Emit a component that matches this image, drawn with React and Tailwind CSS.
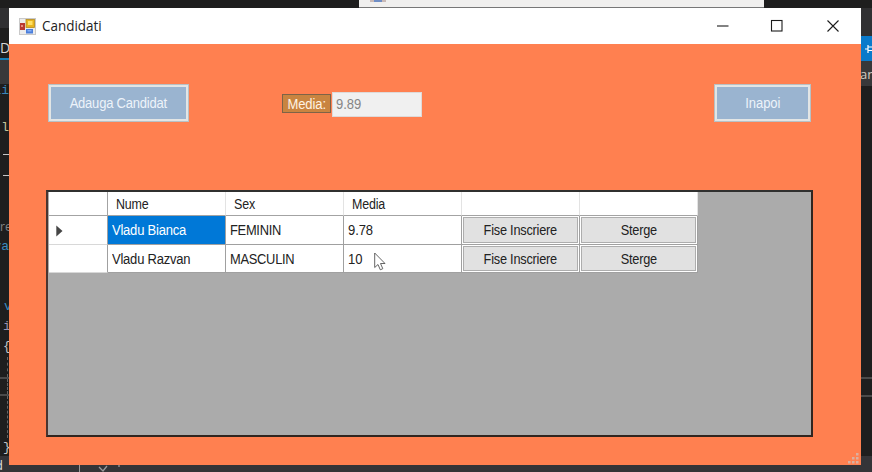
import React from "react";

const UI = "font-['Liberation_Sans',Arial,sans-serif]";

function FormIcon() {
  return (
    <svg width="17" height="17" viewBox="0 0 17 17" className="shrink-0">
      <rect x="0.5" y="0.5" width="16" height="16" fill="#ececec" stroke="#c9c9c9" />
      <rect x="1" y="5" width="5" height="7" fill="#b9382f" />
      <rect x="2" y="7" width="2" height="2" fill="#e88b7d" />
      <rect x="7" y="1.5" width="8.5" height="8" fill="#e9b51e" stroke="#b48b1d" strokeWidth="0.8" />
      <rect x="9" y="3" width="4.5" height="4" fill="#ffe066" />
      <rect x="7" y="11" width="7" height="4.5" fill="#4a7edb" />
      <rect x="8.5" y="12" width="4" height="1.5" fill="#86aff5" />
    </svg>
  );
}

function TitleBar() {
  return (
    <div className="flex h-9 items-center bg-white pl-[10px]">
      <FormIcon />
      <span className="ml-[6px] w-[62px] origin-left scale-x-[0.96] whitespace-nowrap font-['Open_Sans','Noto_Sans',sans-serif] text-[14px] leading-5 text-[#222]">
        Candidati
      </span>
      <svg width="126" height="14" viewBox="0 0 126 14" className="mr-[21px] ml-auto" fill="none" stroke="#1c1c1c" strokeWidth="1.1">
        <path d="M3 7H14.5" />
        <rect x="57.5" y="1.5" width="10.5" height="10.5" />
        <path d="M113.5 1.5L124.5 12.5M124.5 1.5L113.5 12.5" />
      </svg>
    </div>
  );
}

function ActionButton({ className, children }) {
  return (
    <button className={`${UI} h-[38px] border border-[#b8c1c5] bg-[#e2e5e5] p-[2px] text-[14px] text-[#edf3fa] ${className}`}>
      <span className="flex h-full items-center justify-center bg-[#9ab4d0] whitespace-nowrap">
        <span className="scale-x-[0.93]">{children}</span>
      </span>
    </button>
  );
}

function Toolbar() {
  return (
    <div className="flex items-start px-[39px] pt-10 pr-[50px]">
      <ActionButton className="w-[141px] tracking-[-0.25px]">Adauga Candidat</ActionButton>
      <div className={`${UI} mt-[10px] ml-[93px] flex h-[19px] w-[49px] items-center justify-center border border-[#7d6347] bg-[#c98440] pt-px text-[14px] tracking-[-0.1px] text-[#fff3e4]`}>
        <span className="scale-x-[0.93]">Media:</span>
      </div>
      <div className={`${UI} mt-2 ml-px flex h-[25px] w-[90px] items-center border border-[#dedad9] bg-[#f0f0f0] pl-[3px] text-[14px] text-[#858585]`}>
        <span className="origin-left scale-x-[0.93]">9.89</span>
      </div>
      <ActionButton className="ml-auto w-[97px] tracking-[-0.1px]">Inapoi</ActionButton>
    </div>
  );
}

function HeaderCell({ children }) {
  return (
    <div className="flex items-center border-r border-b border-r-[#e3e3e3] border-b-[#a3a3a3] pt-px pl-2 tracking-[-0.2px]">
      <span className="origin-left scale-x-[0.89]">{children}</span>
    </div>
  );
}

function Cell({ selected, children }) {
  return (
    <div className={`flex items-center border-r border-b border-[#a0a0a0] pt-px pl-1 whitespace-nowrap ${selected ? "bg-[#0078d7] text-white" : "bg-white"}`}>
      {children}
    </div>
  );
}

function ButtonCell({ children }) {
  return (
    <div className="border-r border-b border-[#a0a0a0] bg-white p-px">
      <button className="flex h-full w-full items-center justify-center border border-[#adadad] bg-[#e1e1e1] pt-px tracking-[-0.25px] whitespace-nowrap">
        <span className="scale-x-[0.91]">{children}</span>
      </button>
    </div>
  );
}

function Row({ active, name, sex, grade }) {
  return (
    <>
      <div className="flex items-center border-r border-b border-r-[#a0a0a0] border-b-[#d8d8d8] bg-white pt-px pl-[7px]">
        {active && (
          <svg width="7" height="12" viewBox="0 0 7 12">
            <path d="M0.3 0.5L6.5 6L0.3 11.5Z" fill="#454545" />
          </svg>
        )}
      </div>
      <Cell selected={active}><span className="origin-left scale-x-[0.93] tracking-[-0.25px]">{name}</span></Cell>
      <Cell><span className="origin-left scale-x-[0.92] tracking-[-0.3px]">{sex}</span></Cell>
      <Cell><span className="origin-left scale-x-[0.93] tracking-[-0.1px]">{grade}</span></Cell>
      <ButtonCell>Fise Inscriere</ButtonCell>
      <ButtonCell>Sterge</ButtonCell>
    </>
  );
}

function DataGrid() {
  return (
    <div className="mt-[68px] ml-[37px] h-[247px] w-[767px] border-2 border-t-[#30302f] border-r-[#30251f] border-b-[#30251f] border-l-[#4a3530] bg-[#ababab]">
      <div className={`${UI} ml-px grid w-[649px] grid-cols-[59px_118px_118px_118px_118px_118px] grid-rows-[24px_29px_28px] bg-white text-[14px] text-[#222]`}>
        <div className="border-r border-b border-[#a3a3a3]" />
        <HeaderCell>Nume</HeaderCell>
        <HeaderCell>Sex</HeaderCell>
        <HeaderCell>Media</HeaderCell>
        <HeaderCell />
        <HeaderCell />
        <Row active name="Vladu Bianca" sex="FEMININ" grade="9.78" />
        <Row name="Vladu Razvan" sex="MASCULIN" grade="10" />
      </div>
    </div>
  );
}

function EditorLeft() {
  return (
    <div className="flex h-[472px] w-[9px] flex-col items-end overflow-hidden bg-[#1e1e1e] font-['Liberation_Mono',monospace] text-[13px] leading-5">
      <div className="mt-2 h-5 w-full shrink-0 bg-[#303032]" />
      <div className="h-8 w-full shrink-0 border-b-2 border-[#167fb8] pt-[10px] font-['Open_Sans',sans-serif] text-[14px] text-[#d6d6d6]">D</div>
      <div className="h-6 w-full shrink-0 bg-[#38383a]" />
      <div className="h-[34px] shrink-0 leading-[14px] text-[#3b86b8]">li</div>
      <div className="h-9 shrink-0 pl-1 leading-5 text-[#c4c49a]">l</div>
      <div className="h-px w-[6px] shrink-0 bg-[#c5c5c5]" />
      <div className="mt-5 h-px w-[6px] shrink-0 bg-[#c5c5c5]" />
      <div className="mt-[41px] h-5 w-[9px] shrink-0 font-['Open_Sans',sans-serif] text-[12px] text-[#858585]">re</div>
      <div className="h-[60px] shrink-0 text-[#3b8abd]">va</div>
      <div className="h-5 w-[5px] shrink-0 text-[#3b8abd]">v</div>
      <div className="h-5 w-[6px] shrink-0 text-[#9a93b0]">i</div>
      <div className="h-5 w-[6px] shrink-0 text-[#c5c5c5]">{"{"}</div>
      <div className="h-[20px] w-[2px] shrink-0 border-l border-dashed border-[#666]" />
      <div className="h-[19px] w-full shrink-0 border-y-2 border-[#4a4a4a] pl-[7px]">
        <div className="h-full w-px border-l border-dashed border-[#666]" />
      </div>
      <div className="h-[42px] w-[2px] shrink-0 border-l border-dashed border-[#666]" />
      <div className="h-[18px] w-[6px] shrink-0 text-[#c5c5c5]">{"}"}</div>
      <div className="h-5 w-full shrink-0 bg-[#343438] font-['Open_Sans',sans-serif] text-[13px] leading-[18px] text-[#ddd]">
        <span className="ml-[-5px]">d</span>
      </div>
    </div>
  );
}

function EditorRight() {
  return (
    <div className="flex h-[472px] w-[11px] flex-col overflow-hidden bg-[#1e1e1e]">
      <div className="mt-2 h-7 shrink-0 bg-[#303032]" />
      <div className="flex h-[25px] shrink-0 items-center bg-[#0a7acb] pl-1">
        <svg width="8" height="10" viewBox="0 0 8 10" className="shrink-0" fill="none" stroke="#fff" strokeWidth="1.2">
          <path d="M0 5H3M3 1V9M3 3H8M3 6.5H8" />
        </svg>
      </div>
      <div className="h-[25px] shrink-0 overflow-hidden bg-[#38383a] font-['Open_Sans',sans-serif] text-[13px] leading-[26px] text-[#d0cbc0]">
        <span className="ml-[-1px]">an</span>
      </div>
      <div className="mt-[291px] h-[20px] shrink-0 border-y-2 border-[#4a4a4a]" />
      <div className="mt-[59px] grow bg-[#343438]" />
    </div>
  );
}

function WindowBehind() {
  return (
    <div className="absolute top-0 left-[359px] flex h-2 w-[405px] items-start border-b border-[#777] bg-[#f0efee] pl-[11px]">
      <div className="h-[2px] w-4 border-x-4 border-[#c9b9b6] bg-[#6f8ec5]" />
    </div>
  );
}

function StatusBar() {
  return (
    <div className="absolute top-[464px] left-[9px] flex h-2 w-[852px] bg-[#343438]">
      <div className="ml-[70px] h-full w-px bg-[#999]" />
      <svg width="28" height="8" viewBox="0 0 28 8" className="ml-[18px]" fill="none" stroke="#99999c" strokeWidth="1.3">
        <path d="M1 3L5 7L9 2M21 1V3" />
      </svg>
    </div>
  );
}

function SizeGrip() {
  const dots = [[8, 0], [4, 4], [8, 4], [0, 8], [4, 8], [8, 8]];
  return (
    <svg width="11" height="11" viewBox="0 0 11 11" className="absolute right-[2px] bottom-[1px]">
      {dots.map(([x, y]) => (
        <rect key={`${x}-${y}`} x={x} y={y} width="2.5" height="2.5" fill="#dbb0a0" />
      ))}
    </svg>
  );
}

export default function App() {
  return (
    <div className="relative flex h-[472px] w-[872px] justify-between overflow-hidden bg-[#1e1e1e]">
      <EditorLeft />
      <EditorRight />
      <WindowBehind />
      <StatusBar />
      <main className="absolute top-2 left-[9px] h-[457px] w-[852px] bg-[#ff8050]">
        <TitleBar />
        <Toolbar />
        <DataGrid />
        <SizeGrip />
      </main>
      <svg width="13" height="19" viewBox="0 0 13 19" className="absolute top-[252px] left-[374px]">
        <path d="M0.7 1V15.5L4 12.5L6.3 17.8L8.8 16.7L6.5 11.5H11Z" fill="#fff" stroke="#555" strokeWidth="0.9" />
      </svg>
    </div>
  );
}
